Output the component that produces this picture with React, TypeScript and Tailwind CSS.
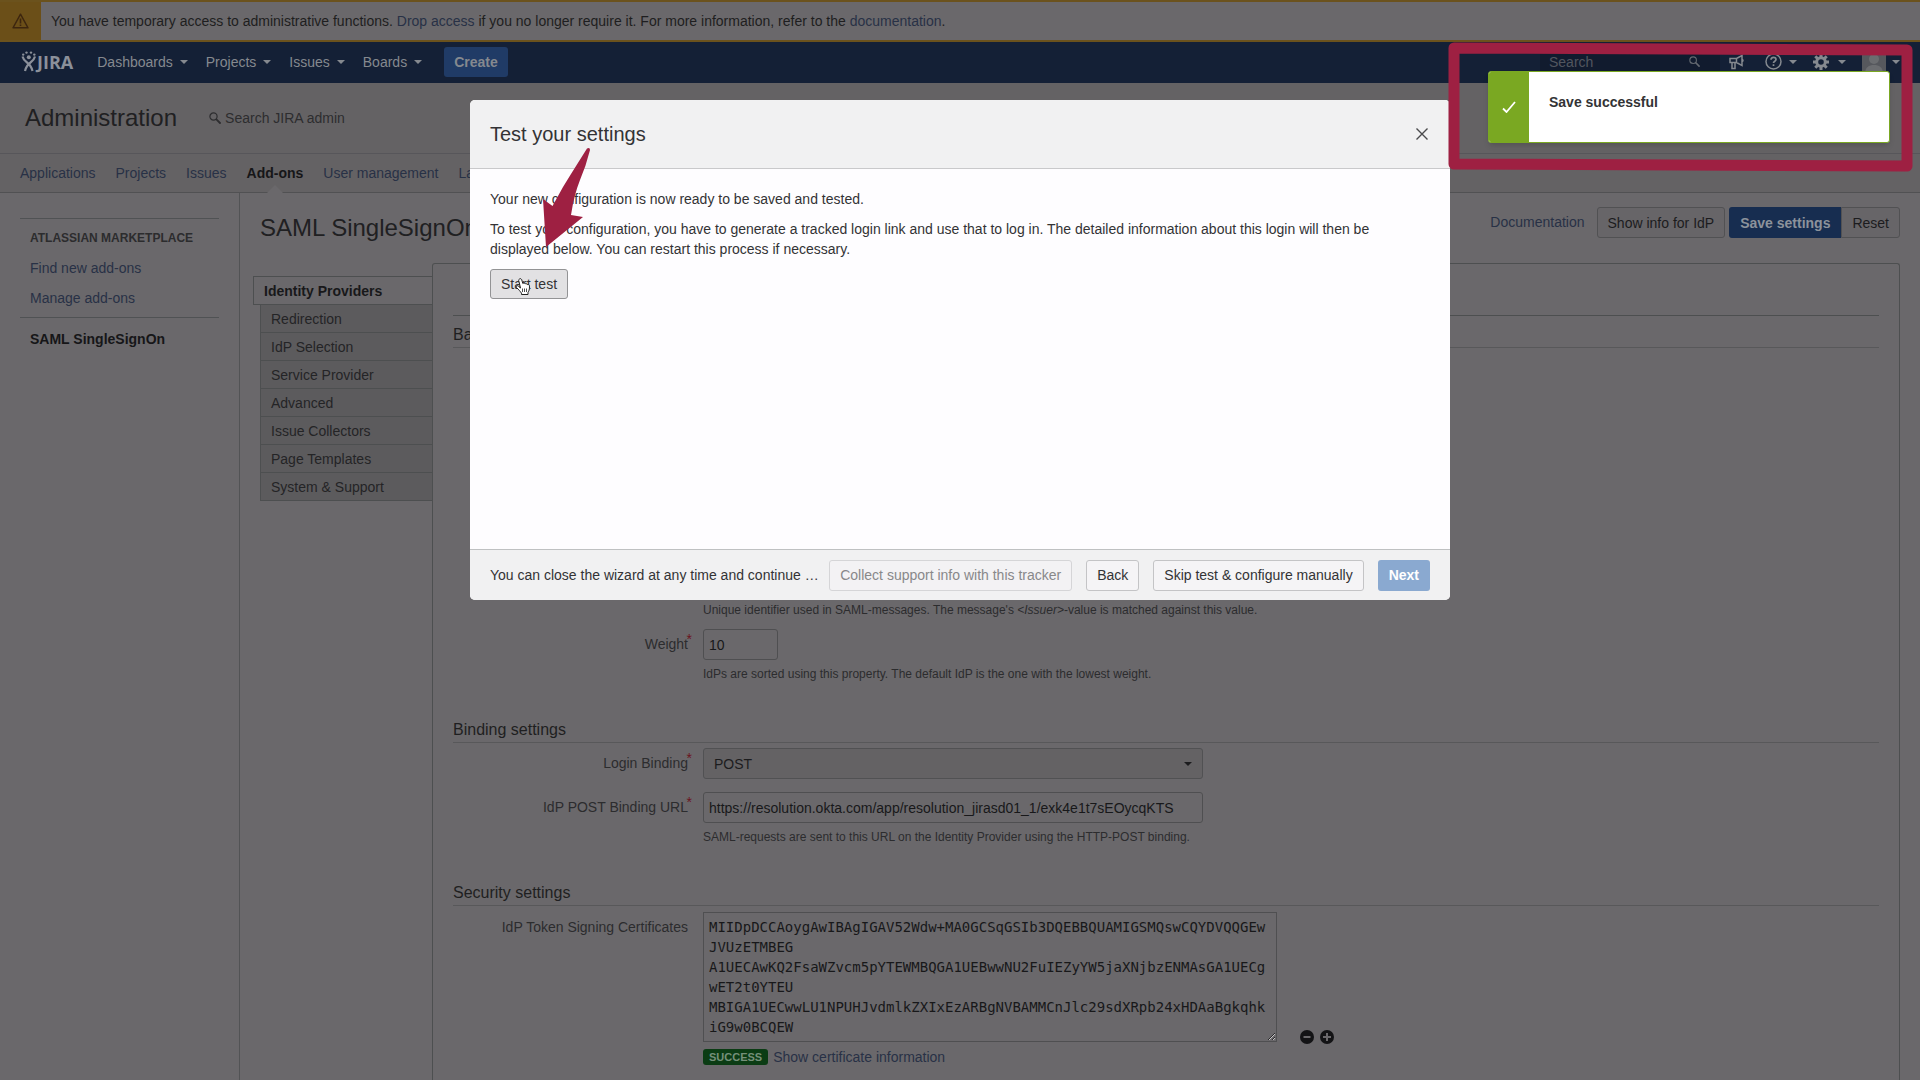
import type { ReactNode } from "react";

const navItems = ["Dashboards", "Projects", "Issues", "Boards"];
const adminTabs = ["Applications", "Projects", "Issues", "Add-ons", "User management", "Latest upgrade report"];
const pluginTabs = [
  "Redirection",
  "IdP Selection",
  "Service Provider",
  "Advanced",
  "Issue Collectors",
  "Page Templates",
  "System & Support",
];

const certificate = `MIIDpDCCAoygAwIBAgIGAV52Wdw+MA0GCSqGSIb3DQEBBQUAMIGSMQswCQYDVQQGEw
JVUzETMBEG
A1UECAwKQ2FsaWZvcm5pYTEWMBQGA1UEBwwNU2FuIEZyYW5jaXNjbzENMAsGA1UECg
wET2t0YTEU
MBIGA1UECwwLU1NPUHJvdmlkZXIxEzARBgNVBAMMCnJlc29sdXRpb24xHDAaBgkqhk
iG9w0BCQEW`;

function Caret({ className = "" }: { className?: string }) {
  return (
    <svg className={className} width="8" height="4" viewBox="0 0 8 4" aria-hidden="true">
      <path d="M0 0h8L4 4z" fill="currentColor" />
    </svg>
  );
}

function SearchIcon({ size = 12 }: { size?: number }) {
  return (
    <svg width={size} height={size} viewBox="0 0 12 12" fill="none" stroke="currentColor" aria-hidden="true">
      <circle cx="4.5" cy="4.5" r="3.6" strokeWidth="1.2" />
      <path d="M7.4 7.4 11 11" strokeWidth="1.8" strokeLinecap="round" />
    </svg>
  );
}

function JiraLogo() {
  return (
    <a href="#" aria-label="JIRA" className="flex items-center text-[#8b909a]">
      <svg width="16" height="21" viewBox="0 0 16 21" fill="none" aria-hidden="true">
        <g fill="currentColor">
          <circle cx="2.2" cy="3.600" r="1.200" />
          <circle cx="5.500" cy="1.600" r="1.200" />
          <circle cx="10" cy="1.600" r="1.200" />
          <circle cx="13.300" cy="3.600" r="1.200" />
          <circle cx="7.800" cy="6.300" r="2" />
        </g>
        <path
          d="M1.500 5.500c.8 3 2.500 4.700 4.500 6 2.500 1.700 4.500 4.500 5.500 8.500M14 5.500c-.8 3-2.500 4.700-4.500 6C7 13.200 5 16 4 20"
          stroke="currentColor"
          strokeWidth="2.200"
        />
      </svg>
      <span className="font-['Open_Sans',sans-serif] text-lg leading-5 font-bold">JIRA</span>
    </a>
  );
}

function Section({ title, children }: { title: string; children?: ReactNode }) {
  return (
    <section>
      <h3 className="border-b border-[#58585a] pb-[2px] text-base leading-5 text-[#1f1f21]">{title}</h3>
      {children}
    </section>
  );
}

function Row({ id, label, required, children }: { id: string; label: string; required?: boolean; children: ReactNode }) {
  return (
    <div className="flex">
      <label htmlFor={id} className="relative w-[235px] shrink-0 pt-[5px] text-right text-[#2c2c2e]">
        {label}
        {required && <span className="absolute top-0 -right-1 text-[#6a1520]">*</span>}
      </label>
      <div className="ml-[15px]">{children}</div>
    </div>
  );
}

function Page() {
  return (
    <div className="flex min-h-screen flex-col bg-[#6a686b]">
      <div className="flex h-[42px] items-center border-y-2 border-[#6b521d] bg-[#6a686b]">
        <div className="flex h-full w-[41px] items-center justify-center bg-[#6b4f18] text-[#3d260f]">
          <svg width="17" height="16" viewBox="0 0 17 16" fill="none" stroke="currentColor" strokeWidth="1.4" aria-hidden="true">
            <path d="M8.500 1.200 16 14.800H1z" strokeLinejoin="round" />
            <path d="M8.500 5.500v5M8.500 11.500v1.600" strokeWidth="1.600" />
          </svg>
        </div>
        <p className="ml-[10px] text-[#1e1e20]">
          You have temporary access to administrative functions.{" "}
          <a href="#" className="text-[#283146]">Drop access</a> if you no longer require it. For more information, refer to the{" "}
          <a href="#" className="text-[#283146]">documentation</a>.
        </p>
      </div>

      <header className="flex h-[41px] items-center bg-[#142036] pr-[20px] pb-[2px] pl-[21px] text-[#85898f]">
        <JiraLogo />
        <nav className="ml-6 flex items-center gap-[18px]">
          {navItems.map((item) => (
            <button key={item} type="button" className="flex items-center gap-[7px]">
              {item}
              <Caret />
            </button>
          ))}
        </nav>
        <button type="button" className="ml-[22px] h-[30px] rounded-[3px] bg-[#203b66] px-[10px] font-bold">Create</button>
        <div className="ml-auto flex items-center">
          <label className="flex items-center bg-[#111b2e] pl-[9px] text-[#51565f]">
            <input
              aria-label="Search"
              placeholder="Search"
              className="h-[30px] w-[140px] bg-transparent placeholder:text-[#51565f]"
            />
            <span className="mr-5 text-[#646970]"><SearchIcon size={11} /></span>
          </label>
          <button type="button" aria-label="Feedback" className="ml-[9px]">
            <svg width="16" height="16" viewBox="0 0 16 16" fill="none" stroke="currentColor" strokeWidth="1.500" aria-hidden="true">
              <path d="M1 4.500h6.500L13 1.500v10L7.500 8.500H1zM3 8.500V14.500h3V8.500M7.500 4.500v4M13 5q2 1.500 0 3" />
            </svg>
          </button>
          <button type="button" aria-label="Help" className="ml-5 flex items-center gap-[7px]">
            <svg width="17" height="17" viewBox="0 0 17 17" fill="none" stroke="currentColor" strokeWidth="1.500" aria-hidden="true">
              <circle cx="8.500" cy="8.500" r="7.500" />
              <path d="M6 6.800C6 5 7.200 4.300 8.500 4.300S11 5.200 11 6.500c0 1.700-2.500 1.700-2.500 3.500M8.500 11.300v1.700" strokeWidth="1.700" />
            </svg>
            <Caret />
          </button>
          <button type="button" aria-label="Administration" className="ml-4 flex items-center gap-[9px]">
            <svg width="16" height="16" viewBox="0 0 16 16" fill="none" stroke="currentColor" aria-hidden="true">
              <circle cx="8" cy="8" r="4.300" strokeWidth="3" />
              <path d="M8 0v3M8 13v3M0 8h3M13 8h3M2.300 2.300l2.200 2.200M11.500 11.500l2.200 2.200M13.700 2.300l-2.200 2.200M4.500 11.500l-2.200 2.200" strokeWidth="3" />
            </svg>
            <Caret />
          </button>
          <button type="button" aria-label="Profile" className="ml-4 flex items-center gap-[6px]">
            <svg width="24" height="24" viewBox="0 0 24 24" aria-hidden="true">
              <rect width="24" height="24" rx="3" fill="#56585d" />
              <circle cx="12" cy="9" r="5" fill="#6b6d70" />
              <path d="M3 24c0-7 4-9 9-9s9 2 9 9z" fill="#6b6d70" />
            </svg>
            <Caret />
          </button>
        </div>
      </header>

      <div className="flex h-[71px] items-center border-b border-[#57565a] bg-[#646264] pl-[25px]">
        <h1 className="text-2xl text-[#202022]">Administration</h1>
        <label className="ml-8 flex items-center gap-1 text-[#2d2d2f]">
          <SearchIcon />
          <input aria-label="Search JIRA admin" placeholder="Search JIRA admin" className="w-40 placeholder:text-[#2d2d2f]" />
        </label>
      </div>
      <nav className="flex h-[39px] items-center gap-5 border-b border-[#515153] bg-[#646264] pl-5 whitespace-nowrap">
        {adminTabs.map((tab) =>
          tab === "Add-ons" ? (
            <a key={tab} href="#" className="relative flex h-full items-center font-bold text-[#161618]">
              {tab}
              <svg className="absolute -bottom-px left-1/2 -translate-x-1/2" width="16" height="8" viewBox="0 0 16 8" aria-hidden="true">
                <path d="M0 8 8 0l8 8z" fill="#6a686b" />
              </svg>
            </a>
          ) : (
            <a key={tab} href="#" className="text-[#283146]">{tab}</a>
          )
        )}
      </nav>

      <div className="flex flex-1">
        <aside className="w-60 shrink-0 border-r border-[#525355] px-5 pt-[25px]">
          <div className="flex flex-col gap-[10px] border-y border-[#505254] px-[10px] pt-[9px] pb-[9px]">
            <h2 className="text-xs leading-5 font-bold text-[#2c2c2e]">ATLASSIAN MARKETPLACE</h2>
            <a href="#" className="text-[#283146]">Find new add-ons</a>
            <a href="#" className="text-[#283146]">Manage add-ons</a>
          </div>
          <a href="#" className="block px-[10px] pt-[11px] font-bold text-[#161618]">SAML SingleSignOn</a>
        </aside>

        <main className="flex min-w-0 flex-1 flex-col pt-[14px] pr-5">
          <div className="flex items-start pl-5">
            <h2 className="pt-[5px] text-2xl text-[#202022]">SAML SingleSignOn</h2>
            <a href="#" className="mr-3 ml-auto pt-[5px] text-[#283146]">Documentation</a>
            <button type="button" className="h-[31px] rounded-[3px] border border-[#515153] bg-[#676568] px-[10px] text-[#1c1c1e]">
              Show info for IdP
            </button>
            <button type="button" className="ml-1 h-[31px] rounded-l-[3px] bg-[#172d50] px-[11px] font-bold text-[#8c929b]">
              Save settings
            </button>
            <button type="button" className="h-[31px] rounded-r-[3px] border border-[#515153] bg-[#676568] px-[10px] text-[#1c1c1e]">
              Reset
            </button>
          </div>

          <div className="mt-[19px] flex flex-1 pl-[13px]">
            <div className="w-[179px] shrink-0 pt-[13px]">
              <button type="button" className="h-[29px] w-full border border-r-0 border-[#4d4f50] pl-[10px] text-left font-bold text-[#18181a]">
                Identity Providers
              </button>
              <div className="ml-[7px] border-l border-[#4d4f50] bg-[#5c5b5d]">
                {pluginTabs.map((tab) => (
                  <button key={tab} type="button" className="block h-7 w-full border-b border-[#4d4f50] pl-[10px] text-left text-[#242426]">
                    {tab}
                  </button>
                ))}
              </div>
            </div>

            <div className="min-w-0 flex-1 rounded-t-[3px] border border-b-0 border-[#4d4f50] px-5 pt-[51px]">
              <div className="mb-[9px] border-t border-[#4d4f50]" />
              <Section title="Basic settings">
                <div className="pt-[252px]">
                  <p className="pl-[250px] text-xs leading-5 text-[#2c2c2e]">
                    Unique identifier used in SAML-messages. The message's <i>&lt;Issuer&gt;</i>-value is matched against this value.
                  </p>
                </div>
                <div className="mt-[9px]">
                  <Row id="weight" label="Weight" required>
                    <input id="weight" defaultValue="10" className="h-[31px] w-[75px] rounded-[3px] border border-[#4f4f51] px-[5px] text-[#18181a]" />
                    <p className="mt-1 text-xs leading-5 text-[#2c2c2e]">
                      IdPs are sorted using this property. The default IdP is the one with the lowest weight.
                    </p>
                  </Row>
                </div>
              </Section>

              <div className="mt-9">
                <Section title="Binding settings">
                  <div className="flex flex-col gap-[13px] pt-[5px]">
                    <Row id="binding" label="Login Binding" required>
                      <div className="relative text-[#1c1c1e]">
                        <select id="binding" className="h-[31px] w-[500px] appearance-none rounded-[3px] border border-[#515153] bg-[#646264] px-[10px]">
                          <option>POST</option>
                        </select>
                        <Caret className="absolute top-[14px] right-[11px]" />
                      </div>
                    </Row>
                    <Row id="url" label="IdP POST Binding URL" required>
                      <input
                        id="url"
                        defaultValue="https://resolution.okta.com/app/resolution_jirasd01_1/exk4e1t7sEOycqKTS"
                        className="h-[31px] w-[500px] rounded-[3px] border border-[#4f4f51] px-[5px] text-[#18181a]"
                      />
                      <p className="mt-1 text-xs leading-5 text-[#2c2c2e]">
                        SAML-requests are sent to this URL on the Identity Provider using the HTTP-POST binding.
                      </p>
                    </Row>
                  </div>
                </Section>
              </div>

              <div className="mt-9">
                <Section title="Security settings">
                  <div className="pt-[6px]">
                    <Row id="cert" label="IdP Token Signing Certificates">
                      <div className="flex items-end">
                        <textarea
                          id="cert"
                          defaultValue={certificate}
                          className="mb-[2px] h-[130px] w-[574px] overflow-hidden border border-[#4f4f51] px-[5px] pt-1 font-['DejaVu_Sans_Mono',monospace] text-[#18181a]"
                        />
                        <div className="ml-[23px] flex gap-[6px] text-[#131315]">
                          <button type="button" aria-label="Remove certificate">
                            <svg width="14" height="14" viewBox="0 0 14 14" aria-hidden="true">
                              <circle cx="7" cy="7" r="7" fill="currentColor" />
                              <path d="M3.500 7h7" stroke="#6a686b" strokeWidth="2" />
                            </svg>
                          </button>
                          <button type="button" aria-label="Add certificate">
                            <svg width="14" height="14" viewBox="0 0 14 14" aria-hidden="true">
                              <circle cx="7" cy="7" r="7" fill="currentColor" />
                              <path d="M3 7h8M7 3v8" stroke="#6a686b" strokeWidth="2" />
                            </svg>
                          </button>
                        </div>
                      </div>
                      <div className="mt-[3px] flex items-center gap-[5px]">
                        <span className="rounded-[3px] bg-[#0b3c14] px-[6px] text-[11px] leading-4 font-bold text-[#75907a]">SUCCESS</span>
                        <a href="#" className="text-[#283146]">Show certificate information</a>
                      </div>
                    </Row>
                  </div>
                </Section>
              </div>
            </div>
          </div>
        </main>
      </div>
    </div>
  );
}

function Dialog() {
  const button = "h-[31px] shrink-0 rounded-[3px] border border-[#c4c4c6] bg-[#f5f4f6] px-[10px]";
  return (
    <div
      role="dialog"
      aria-label="Test your settings"
      className="absolute top-[100px] left-1/2 flex h-[500px] w-[980px] -translate-x-1/2 flex-col overflow-hidden rounded-[5px] bg-[#fefdff] text-[#333335]"
    >
      <div className="flex h-[69px] items-center border-b border-[#c9c9cb] bg-[#f1f1f2] px-5">
        <h2 className="text-xl">Test your settings</h2>
        <button type="button" aria-label="Close" className="ml-auto p-[2px]">
          <svg width="12" height="12" viewBox="0 0 12 12" stroke="#4a4a4c" strokeWidth="1.400" aria-hidden="true">
            <path d="m.500.500 11 11m0-11-11 11" />
          </svg>
        </button>
      </div>
      <div className="flex-1 px-5 pt-5">
        <p>Your new configuration is now ready to be saved and tested.</p>
        <p className="mt-[10px]">
          To test your configuration, you have to generate a tracked login link and use that to log in. The detailed information about this login will then be displayed below. You can restart this process if necessary.
        </p>
        <button type="button" className="mt-[10px] h-[30px] rounded-[3px] border border-[#939395] bg-[#e2e1e3] px-[10px]">
          Start test
        </button>
      </div>
      <div className="flex h-[51px] items-center border-t border-[#bfc1c2] bg-[#f1f1f2] px-5">
        <p className="whitespace-nowrap">You can close the wizard at any time and continue …</p>
        <button type="button" disabled className="ml-auto h-[31px] shrink-0 rounded-[3px] border border-[#d5d5d7] bg-[#f3f2f4] px-[10px] text-[#88888a]">
          Collect support info with this tracker
        </button>
        <button type="button" className={`${button} ml-[14px]`}>Back</button>
        <button type="button" className={`${button} ml-[14px]`}>Skip test &amp; configure manually</button>
        <button type="button" className="ml-[14px] h-[31px] shrink-0 rounded-[3px] bg-[#8aa9d0] px-[11px] font-bold text-white">Next</button>
      </div>
    </div>
  );
}

export default function App() {
  return (
    <div className="relative overflow-hidden font-['Liberation_Sans',sans-serif] text-sm leading-5">
      <Page />
      <Dialog />

      {/* Toast */}
      <div role="status" className="absolute top-[71px] right-[30px] flex h-[72px] w-[402px] overflow-hidden rounded-[3px] border border-[#7aa822] bg-white shadow-md">
        <div className="flex w-10 items-center justify-center bg-[#7aa822]">
          <svg width="14" height="12" viewBox="0 0 14 12" fill="none" stroke="white" strokeWidth="1.800" aria-hidden="true">
            <path d="M1 7.500 4.500 11 13 1" />
          </svg>
        </div>
        <p className="pt-[20px] pl-[20px] font-bold text-[#333335]">Save successful</p>
      </div>

      {/* Callout frame and arrow */}
      <svg className="pointer-events-none absolute top-[42px] right-[7px]" width="465" height="131" viewBox="0 0 465 131" fill="none" aria-hidden="true">
        <path d="m6 6 453 2v116L6 122z" stroke="#9e2042" strokeWidth="11" strokeLinejoin="round" />
      </svg>
      <svg className="pointer-events-none absolute top-[147px] left-[542px]" width="50" height="102" viewBox="0 0 50 102" aria-hidden="true">
        <path d="M45 1.500q3-1.500 3 1.500-4 16-10 30-6 15-9 35l12 2L4 100 1 52l9.500 7L21 40l8-13z" fill="#9e2042" />
      </svg>
      <svg className="pointer-events-none absolute top-[277px] left-[515px]" width="17" height="19" viewBox="0 0 17 19" aria-hidden="true">
        <path
          d="M4.500 2c1.200-.8 2 0 2.300 1l1 3.500c1-.8 2-.3 2.300.3 1-.5 2 0 2.200.8 1.200-.5 2.200.3 2.200 1.500 0 4-.5 4.500-1.500 6.400V17.500H6.500v-1.300C5 14 4 13 1.500 10.500c-.8-1.200.5-2.300 1.700-1.500L5.500 11 3.700 3.500q-.2-1 .8-1.500z"
          fill="white"
          stroke="#222"
        />
        <path d="M7.500 11.500v3.500M9.500 11.500v3.500M11.500 11.500v3.500" stroke="#222" strokeWidth=".8" />
      </svg>
    </div>
  );
}
